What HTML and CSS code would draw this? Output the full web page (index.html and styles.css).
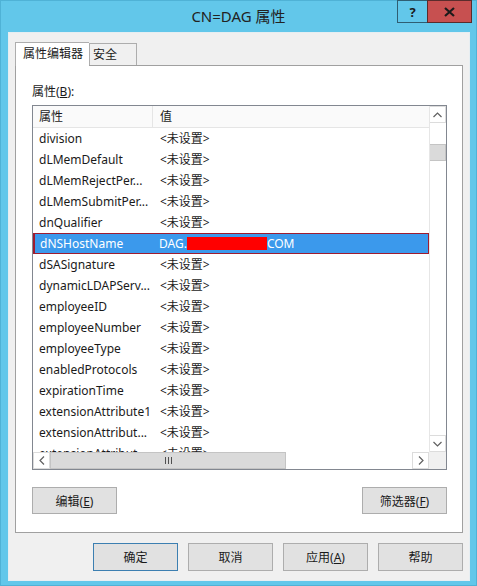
FILE: index.html
```html
<!DOCTYPE html>
<html lang="zh-cn">
<head>
    <meta charset="UTF-8">
    <title>CN=DAG 属性</title>
    <link rel="stylesheet" href="styles.css">
</head>
<body>
    <div class="window">
        <div class="titlebar">
            <div></div>
            <div class="title">CN=DAG 属性</div>
            <div class="caption-buttons">
                <div class="cap-btn help">?</div>
                <div class="cap-btn close">
                    <svg width="11" height="10" viewBox="0 0 11 10"><path d="M1 1 L10 9 M10 1 L1 9" stroke="#1b1b1b" stroke-width="2.2"/></svg>
                </div>
            </div>
        </div>

        <div class="dialog">
            <div class="tabs">
                <div class="tab active">属性编辑器</div>
                <div class="tab">安全</div>
            </div>

            <div class="tab-panel">
                <div class="label">属性(<u>B</u>):</div>

                <div class="list">
                    <div class="list-main">
                        <div class="list-view">
                            <div class="list-head">
                                <div class="col-name">属性</div>
                                <div class="col-value">值</div>
                            </div>
                            <!-- 属性列表 -->
                            <div class="row"><div class="col-name">division</div><div class="col-value">&lt;未设置&gt;</div></div>
                            <div class="row"><div class="col-name">dLMemDefault</div><div class="col-value">&lt;未设置&gt;</div></div>
                            <div class="row"><div class="col-name">dLMemRejectPer...</div><div class="col-value">&lt;未设置&gt;</div></div>
                            <div class="row"><div class="col-name">dLMemSubmitPer...</div><div class="col-value">&lt;未设置&gt;</div></div>
                            <div class="row"><div class="col-name">dnQualifier</div><div class="col-value">&lt;未设置&gt;</div></div>
                            <div class="row selected"><div class="col-name">dNSHostName</div><div class="col-value">DAG.<span class="redact"></span>COM</div></div>
                            <div class="row"><div class="col-name">dSASignature</div><div class="col-value">&lt;未设置&gt;</div></div>
                            <div class="row"><div class="col-name">dynamicLDAPServ...</div><div class="col-value">&lt;未设置&gt;</div></div>
                            <div class="row"><div class="col-name">employeeID</div><div class="col-value">&lt;未设置&gt;</div></div>
                            <div class="row"><div class="col-name">employeeNumber</div><div class="col-value">&lt;未设置&gt;</div></div>
                            <div class="row"><div class="col-name">employeeType</div><div class="col-value">&lt;未设置&gt;</div></div>
                            <div class="row"><div class="col-name">enabledProtocols</div><div class="col-value">&lt;未设置&gt;</div></div>
                            <div class="row"><div class="col-name">expirationTime</div><div class="col-value">&lt;未设置&gt;</div></div>
                            <div class="row"><div class="col-name">extensionAttribute1</div><div class="col-value">&lt;未设置&gt;</div></div>
                            <div class="row"><div class="col-name">extensionAttribut...</div><div class="col-value">&lt;未设置&gt;</div></div>
                            <div class="row"><div class="col-name">extensionAttribut...</div><div class="col-value">&lt;未设置&gt;</div></div>
                        </div>
                        <div class="vscroll">
                            <div class="sb-btn">
                                <svg width="9" height="6" viewBox="0 0 9 6"><polyline points="0.5,5 4.5,1 8.5,5" fill="none" stroke="#606060" stroke-width="1.2"/></svg>
                            </div>
                            <div class="sb-track">
                                <div class="vthumb"></div>
                            </div>
                            <div class="sb-btn">
                                <svg width="9" height="6" viewBox="0 0 9 6"><polyline points="0.5,1 4.5,5 8.5,1" fill="none" stroke="#606060" stroke-width="1.2"/></svg>
                            </div>
                        </div>
                    </div>
                    <div class="list-bottom">
                        <div class="hscroll">
                            <div class="sb-btn">
                                <svg width="6" height="9" viewBox="0 0 6 9"><polyline points="5,0.5 1,4.5 5,8.5" fill="none" stroke="#606060" stroke-width="1.2"/></svg>
                            </div>
                            <div class="sb-track">
                                <div class="hthumb"><span></span><span></span><span></span></div>
                            </div>
                            <div class="sb-btn">
                                <svg width="6" height="9" viewBox="0 0 6 9"><polyline points="1,0.5 5,4.5 1,8.5" fill="none" stroke="#606060" stroke-width="1.2"/></svg>
                            </div>
                        </div>
                        <div class="corner"></div>
                    </div>
                </div>

                <div class="panel-buttons">
                    <button class="btn">编辑(<u>E</u>)</button>
                    <button class="btn">筛选器(<u>F</u>)</button>
                </div>
            </div>

            <div class="dialog-buttons">
                <button class="btn default">确定</button>
                <button class="btn">取消</button>
                <button class="btn">应用(<u>A</u>)</button>
                <button class="btn">帮助</button>
            </div>
        </div>
    </div>
</body>
</html>
```

FILE: styles.css
```css
* {
    margin: 0;
    padding: 0;
    box-sizing: border-box;
}

body {
    font-family: "Noto Sans", "Noto Sans CJK SC", sans-serif;
    font-size: 12px;
    color: #1a1a1a;
    background: #62c7ea;
}

.window {
    width: 477px;
    height: 586px;
    background: #62c7ea;
    border: 1px solid #4fb2d6;
    display: flex;
    flex-direction: column;
}

.titlebar {
    height: 31px;
    display: grid;
    grid-template-columns: 1fr auto 1fr;
}

.title {
    font-size: 15px;
    color: #222;
    line-height: 31px;
}

.caption-buttons {
    display: flex;
    justify-content: flex-end;
    align-items: flex-start;
    margin-top: -1px;
    padding-right: 4px;
}

.cap-btn {
    height: 23px;
    display: flex;
    justify-content: center;
    align-items: center;
    border: 1px solid #2f5e72;
}

.help {
    width: 30px;
    font-weight: bold;
    font-size: 13px;
    color: #1b1b1b;
    border-right: none;
}

.close {
    width: 45px;
    background: #c75050;
    border-color: #5a2c2c;
}

.dialog {
    flex: 1;
    margin: 0 6px 4px 7px;
    background: #f0f0f0;
    border: 1px solid #e6eef2;
    padding: 9px 6px 0 6px;
}

.tabs {
    display: flex;
    align-items: flex-end;
    height: 23px;
}

.tab {
    height: 22px;
    padding: 0 19px 0 3px;
    line-height: 22px;
    border: 1px solid #adadad;
    border-bottom: none;
    background: #f0f0f0;
}

.tab.active {
    height: 24px;
    margin-bottom: -1px;
    padding: 0 6px 0 7px;
    background: #fff;
    border-right: none;
    position: relative;
    z-index: 1;
}

.tab-panel {
    height: 468px;
    background: #fff;
    border: 1px solid #a0a0a0;
    padding: 17px 16px 0 16px;
}

.label {
    line-height: 18px;
}

.list {
    margin-top: 4px;
    width: 415px;
    height: 365px;
    border: 1px solid #828790;
    display: grid;
    grid-template-rows: 1fr 17px;
}

.list-main {
    display: flex;
    overflow: hidden;
}

.list-view {
    flex: 1;
    overflow: hidden;
}

.list-head {
    display: flex;
    height: 22px;
    line-height: 21px;
    background: #fafafa;
    border-bottom: 1px solid #e5e5e5;
}

.list-head .col-name {
    border-right: 1px solid #e5e5e5;
}

.row {
    display: flex;
    height: 21px;
    line-height: 21px;
    white-space: nowrap;
}

.col-name {
    width: 120px;
    padding-left: 6px;
    flex-shrink: 0;
}

.col-value {
    padding-left: 7px;
}

.row.selected {
    background: #3b99ec;
    color: #fff;
    border: 1px solid #9e1c30;
    border-left-width: 2px;
    line-height: 19px;
}

.row.selected .col-name {
    width: 117px;
    padding-left: 5px;
}

.redact {
    display: inline-block;
    width: 80px;
    height: 13px;
    background: #ff0000;
    vertical-align: -2px;
}

.vscroll {
    width: 17px;
    display: flex;
    flex-direction: column;
    border-left: 1px solid #e6e6e6;
}

.sb-btn {
    width: 17px;
    height: 17px;
    display: flex;
    justify-content: center;
    align-items: center;
    background: #fff;
    border: 1px solid #dcdcdc;
}

.vscroll .sb-btn {
    width: 16px;
    border-left: none;
}

.sb-track {
    flex: 1;
    background: #fff;
}

.vthumb {
    margin-top: 21px;
    height: 17px;
    background: #dadada;
    border: 1px solid #c4c4c4;
    border-left: none;
}

.list-bottom {
    display: flex;
}

.hscroll {
    flex: 1;
    display: flex;
}

.hscroll .sb-track {
    display: flex;
}

.hthumb {
    width: 236px;
    height: 17px;
    background: #dadada;
    border: 1px solid #c4c4c4;
    display: flex;
    justify-content: center;
    align-items: center;
    gap: 2px;
}

.hthumb span {
    width: 1px;
    height: 7px;
    background: #505050;
}

.corner {
    width: 17px;
    background: #f0f0f0;
}

.panel-buttons {
    margin-top: 17px;
    width: 415px;
    display: flex;
    justify-content: space-between;
}

.btn {
    width: 85px;
    height: 27px;
    font-family: "Noto Sans", "Noto Sans CJK SC", sans-serif;
    font-size: 12px;
    color: #1a1a1a;
    background: #e1e1e1;
    border: 1px solid #adadad;
}

.dialog-buttons {
    margin-top: 10px;
    display: flex;
    justify-content: flex-end;
    gap: 10px;
}

.dialog-buttons .btn {
    height: 28px;
}

.btn.default {
    border-color: #3c7fb1;
}
```
